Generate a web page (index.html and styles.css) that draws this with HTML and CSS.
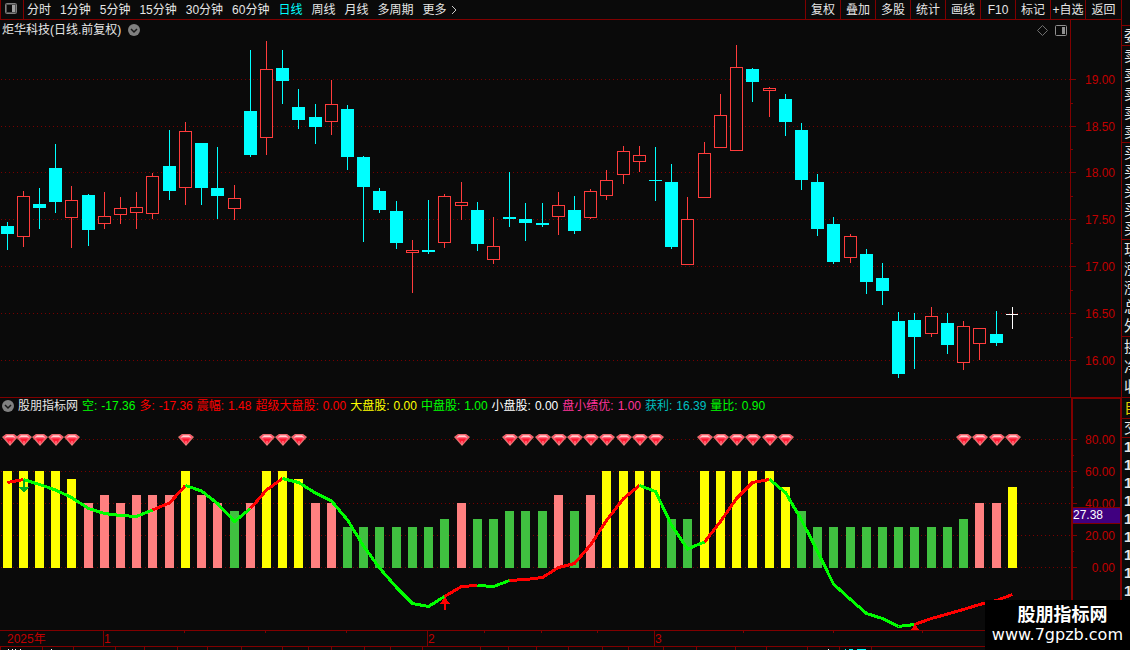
FILE: index.html
```html
<!DOCTYPE html>
<html lang="zh-CN">
<head>
<meta charset="utf-8">
<title>炬华科技 日线</title>
<link rel="stylesheet" href="styles.css">
</head>
<body>
<div class="terminal">
  <main class="main">
    <header class="topbar">
      <button class="layout-btn" type="button" aria-label="布局">
        <svg width="12" height="12" viewBox="0 0 12 12"><rect x=".5" y=".5" width="11" height="10" rx="1" fill="none" stroke="#808080"/><rect x="1.500" y="1.500" width="9" height="8" fill="none" stroke="#505050"/><rect x="7" y="2" width="3" height="7" fill="#a0a0a0"/></svg>
      </button>
      <nav class="periods">
        <button type="button">分时</button>
        <button type="button">1分钟</button>
        <button type="button">5分钟</button>
        <button type="button">15分钟</button>
        <button type="button">30分钟</button>
        <button type="button">60分钟</button>
        <button type="button" class="active">日线</button>
        <button type="button">周线</button>
        <button type="button">月线</button>
        <button type="button">多周期</button>
        <button type="button" class="more">更多<svg width="6" height="10" viewBox="0 0 6 10"><path d="M1 1l4 4-4 4" fill="none" stroke="#c8c8c8"/></svg></button>
      </nav>
      <div class="tools">
        <button type="button">复权</button>
        <button type="button">叠加</button>
        <button type="button">多股</button>
        <button type="button">统计</button>
        <button type="button">画线</button>
        <button type="button">F10</button>
        <button type="button">标记</button>
        <button type="button">+自选</button>
        <button type="button">返回</button>
      </div>
    </header>

    <section class="panel price">
      <div class="plot">
        <div class="price-head">
          <h1>炬华科技(日线.前复权)</h1>
          <button type="button" aria-label="展开"><svg width="12" height="12" viewBox="0 0 12 12"><circle cx="6" cy="6" r="6" fill="#808080"/><path d="M3 5l3 3 3-3" fill="none" stroke="#181818" stroke-width="1.5"/></svg></button>
          <span class="spacer"></span>
          <button type="button" aria-label="标注"><svg width="11" height="11" viewBox="0 0 11 11"><path d="M5.5.5l5 5-5 5-5-5z" fill="none" stroke="#707070"/></svg></button>
          <button type="button" aria-label="侧栏"><svg width="12" height="11" viewBox="0 0 12 11"><rect x=".5" y=".5" width="11" height="10" rx="1" fill="none" stroke="#909090"/><rect x="7" y="2" width="3" height="7" fill="#909090"/></svg></button>
        </div>
        <svg class="chart" id="price-chart" width="100%" height="357"></svg>
      </div>
      <svg class="scale" id="price-scale" width="50" height="377"></svg>
    </section>

    <section class="panel indicator">
      <div class="plot">
        <div class="legend">
          <button type="button" aria-label="展开"><svg width="12" height="12" viewBox="0 0 12 12"><circle cx="6" cy="6" r="6" fill="#808080"/><path d="M3 5l3 3 3-3" fill="none" stroke="#181818" stroke-width="1.5"/></svg></button>
          <h2>股朋指标网</h2>
          <span class="item lime"><span>空:</span><b>-17.36</b></span>
          <span class="item red"><span>多:</span><b>-17.36</b></span>
          <span class="item red"><span>震幅:</span><b>1.48</b></span>
          <span class="item red"><span>超级大盘股:</span><b>0.00</b></span>
          <span class="item yellow"><span>大盘股:</span><b>0.00</b></span>
          <span class="item lime"><span>中盘股:</span><b>1.00</b></span>
          <span class="item white"><span>小盘股:</span><b>0.00</b></span>
          <span class="item pink"><span>盘小绩优:</span><b>1.00</b></span>
          <span class="item teal"><span>获利:</span><b>16.39</b></span>
          <span class="item lime"><span>量比:</span><b>0.90</b></span>
        </div>
        <svg class="chart" id="ind-chart" width="100%" height="215"></svg>
      </div>
      <div class="scale-box">
        <svg class="scale" id="ind-scale" width="47" height="230"></svg>
        <output class="marker">27.38</output>
      </div>
    </section>

    <svg class="timeline" id="timeline" width="100%" height="17"></svg>
    <svg class="status" id="status" width="100%" height="3"></svg>
  </main>

  <aside class="quotes">
    <div class="group rows19"><span>委</span></div>
    <div class="group rows19 five"><span>卖</span><span>卖</span><span>卖</span><span>卖</span><span>卖</span></div>
    <div class="group rows19 five"><span>买</span><span>买</span><span>买</span><span>买</span><span>买</span></div>
    <div class="group rows19 five"><span>现</span><span>涨</span><span>涨</span><span>总</span><span>外</span></div>
    <div class="group rows20"><span>换</span><span>净</span><span>收</span></div>
    <div class="group rows20 tab"><span>自</span></div>
    <div class="group rows18"><span>交</span></div>
    <div class="group rows18 ticks"><span>1</span><span>1</span><span>1</span><span>1</span><span>1</span><span>1</span><span>1</span><span>1</span><span>1</span></div>
  </aside>

  <div class="watermark">
    <strong>股朋指标网</strong>
    <span>www.7gpzb.com</span>
  </div>
</div>
<script src="chart.js"></script>
</body>
</html>
```

FILE: styles.css
```css
* { box-sizing: border-box; }

body {
  margin: 0;
  background: #0a0a0a;
  color: #e6e6e6;
  font: 12px/16px "Liberation Sans", "Noto Sans CJK SC", sans-serif;
}

button {
  margin: 0;
  padding: 0;
  border: 0;
  background: none;
  color: inherit;
  font: inherit;
  white-space: nowrap;
  cursor: pointer;
}

svg { display: block; flex: none; }
h1, h2, b { margin: 0; font-size: 12px; font-weight: 400; }

.terminal {
  position: relative;
  display: flex;
  height: 100vh;
  overflow: hidden;
}

.main {
  flex: 1;
  min-width: 0;
  display: flex;
  flex-direction: column;
}

/* top bar */
.topbar {
  display: flex;
  height: 20px;
  flex: none;
  border-bottom: 1px solid #800000;
}
.layout-btn {
  width: 24px;
  padding: 0 4px 2px;
  border: solid #800000;
  border-width: 0 1px;
}
.periods {
  flex: 1;
  display: flex;
  gap: 9px;
  padding-left: 3px;
  line-height: 18px;
}
.periods .active { color: #00ffff; }
.more { display: flex; align-items: center; gap: 4px; }
.tools { display: flex; line-height: 18px; }
.tools button {
  width: 35px;
  border-left: 1px solid #800000;
}
.tools button:last-child { width: 36px; }

/* panels */
.panel { display: flex; flex: none; }
.plot { flex: 1; min-width: 0; }
.price-head {
  display: flex;
  align-items: center;
  gap: 7px;
  height: 20px;
  padding: 0 3px 0 2px;
}
.price-head h1 { white-space: nowrap; }
.spacer { flex: 1; }
.price .scale { border-left: 1px solid #800000; width: 51px; }

.indicator { border-top: 1px solid #800000; }
.legend {
  display: flex;
  align-items: center;
  gap: 4px;
  height: 17px;
  padding: 0 0 2px 2px;
  white-space: nowrap;
}
.item { display: flex; gap: 4px; }
.lime { color: #00ff00; }
.red { color: #ff0000; }
.yellow { color: #ffff00; }
.white { color: #ffffff; }
.pink { color: #ff3399; }
.teal { color: #00c0c0; }

.scale-box {
  position: relative;
  border: solid #800000;
  border-width: 1px 1px 0 2px;
}
.marker {
  position: absolute;
  top: 108px;
  left: 0;
  right: 0;
  background: #400080;
  border: solid #800000;
  border-width: 1px 0;
  line-height: 15px;
  color: #ffffff;
}

.timeline { border-top: 1px solid #800000; border-bottom: 1px solid #800000; }

/* quote column */
.quotes {
  width: 9px;
  flex: none;
  overflow: hidden;
  padding-top: 25px;
  border-left: 1px solid #800000;
  font-size: 15px;
}
.group {
  border-top: 1px solid #800000;
  padding-left: 2px;
}
.group span { display: block; }
.rows19 { line-height: 19px; }
.five { padding-bottom: 1px; }
.rows20 { line-height: 20px; }
.rows18 { line-height: 18px; }
.tab { color: #e0d000; }
.ticks { font-weight: 700; }

/* watermark */
.watermark {
  position: absolute;
  right: 0;
  bottom: 0;
  padding: 4px 7px 6px;
  background: #000000;
  color: #ffffff;
  text-align: center;
}
.watermark strong {
  display: block;
  padding-left: 10px;
  font-size: 18px;
  line-height: 22px;
}
.watermark span {
  display: block;
  font: 16px/18px "DejaVu Sans", sans-serif;
}

/* chart marks */
.chart, .scale, .timeline, .status { shape-rendering: crispEdges; overflow: hidden; }
.grid { stroke: #780000; stroke-dasharray: 1 3; }
.up { fill: #0a0a0a; stroke: #ff3c3c; }
.wick-up { stroke: #ff3c3c; }
.down { fill: #00ffff; }
.wick-down { stroke: #00ffff; }
.cross { stroke: #ffffff; }
.bar-high { fill: #ffff00; }
.bar-mid { fill: #ff8080; }
.bar-low { fill: #40c040; }
.trend { fill: none; stroke-width: 3; }
.tick { stroke: #800000; }
.label { fill: #c00000; font-size: 12px; }
.end { text-anchor: end; }
```

FILE: chart.js
```js
const NS = 'http://www.w3.org/2000/svg';

function add(parent, tag, attrs, text) {
  const el = document.createElementNS(NS, tag);
  for (const k in attrs) el.setAttribute(k, attrs[k]);
  if (text) el.textContent = text;
  parent.appendChild(el);
  return el;
}
function layer(id, top) {
  return add(document.getElementById(id), 'g', { transform: `translate(0,${-top})` });
}
function hline(g, cls, x1, x2, y) {
  add(g, 'line', { class: cls, x1, x2, y1: y + 0.5, y2: y + 0.5 });
}
function vline(g, cls, x, y1, y2) {
  if (y2 > y1) add(g, 'line', { class: cls, x1: x + 0.5, x2: x + 0.5, y1, y2 });
}

// x, high, body top, body bottom, low, direction
const candles = [
  [1,222,226,234,250,0],[17,191,196,237,247,1],[33,188,204,208,229,0],[49,144,168,202,213,0],
  [65,186,200,218,248,1],[82,194,195,230,246,0],[98,192,216,224,229,1],[114,197,208,215,224,1],
  [130,192,207,213,229,1],[146,173,176,214,219,1],[163,130,166,191,200,0],[179,122,131,188,205,1],
  [195,143,143,188,205,0],[211,147,188,196,219,0],[228,185,198,209,220,1],[244,50,111,155,157,0],
  [260,41,69,138,155,1],[276,50,68,81,104,0],[292,89,107,120,129,0],[309,104,117,127,144,0],
  [325,80,104,122,135,1],[341,105,109,157,170,0],[357,156,157,187,242,0],[373,188,191,210,213,0],
  [390,201,211,243,249,0],[406,240,250,253,293,1],[422,200,250,252,254,0],[438,194,196,243,248,1],
  [455,182,202,206,220,1],[471,202,210,244,251,0],[487,217,246,260,264,1],[503,172,217,219,227,0],
  [519,203,219,223,241,0],[536,203,223,225,227,0],[552,192,205,217,235,1],[568,196,210,231,234,0],
  [584,189,191,218,219,1],[600,170,180,196,200,1],[617,146,151,175,184,1],[633,146,155,162,172,1],
  [649,147,180,181,201,0],[665,164,182,247,249,0],[681,197,219,265,265,1],[698,142,153,198,198,1],
  [714,94,115,148,148,1],[730,45,67,151,151,1],[746,68,69,82,102,0],[763,87,88,91,117,1],
  [779,94,99,122,136,0],[795,123,130,180,190,0],[811,174,182,229,236,0],[827,217,224,262,264,0],
  [844,234,236,258,263,1],[860,249,254,282,294,0],[876,263,278,291,305,0],[892,312,321,374,378,0],
  [908,313,320,337,369,0],[925,307,316,334,337,1],[941,313,323,345,354,0],[957,321,326,363,370,1],
  [973,328,328,344,360,1],[990,311,334,343,346,0],[1006,307,314,315,329,2]
];
const xs = candles.map(c => c[0]);

const price = layer('price-chart', 40);
const priceRows = [[79,'19.00'],[126,'18.50'],[172,'18.00'],[219,'17.50'],[266,'17.00'],[313,'16.50'],[360,'16.00']];
priceRows.forEach(([y]) => hline(price, 'grid', 1, '100%', y));
for (const [x, high, top, bottom, low, dir] of candles) {
  if (dir === 2) {
    hline(price, 'cross', x, x + 12, top);
    vline(price, 'cross', x + 6, high, low);
    continue;
  }
  const wick = dir ? 'wick-up' : 'wick-down';
  vline(price, wick, x + 6, high, top);
  vline(price, wick, x + 6, bottom, low);
  if (dir) add(price, 'rect', { class: 'up', x: x + 0.5, y: top + 0.5, width: 12, height: bottom - top - 1 });
  else add(price, 'rect', { class: 'down', x, y: top, width: 13, height: bottom - top });
}

const pScale = layer('price-scale', 20);
priceRows.forEach(([y, t]) => {
  hline(pScale, 'tick', 0, 5, y);
  add(pScale, 'text', { class: 'label end', x: 44, y: y + 5 }, t);
});
[103,149,196,243,290,337].forEach(y => hline(pScale, 'tick', 0, 2, y));

// indicator panel
const ind = layer('ind-chart', 415);
const indRows = [[439,'80.00'],[471,'60.00'],[503,'40.00'],[535,'20.00'],[567,'0.00']];
indRows.forEach(([y]) => hline(ind, 'grid', 1, '100%', y));

const strength = [60,60,60,60,55,40,45,40,45,45,45,60,45,40,35,40,60,60,55,40,40,25,25,25,25,25,25,30,40,30,30,
  35,35,35,45,35,45,60,60,60,60,30,30,60,60,60,60,60,50,35,25,25,25,25,25,25,25,25,25,30,40,40,50];
strength.forEach((v, i) => {
  const top = 567 - v * 1.6;
  const cls = v >= 50 ? 'bar-high' : v >= 40 ? 'bar-mid' : 'bar-low';
  add(ind, 'rect', { class: cls, x: xs[i] + 2, y: top, width: 9, height: 568 - top });
});

const trend = [482.5,479.5,484.5,490,497.5,508.5,513.5,515.5,516.5,510,503,485.5,491,503.5,521.5,508.5,490,478.5,
  482.5,493,501,520,546,568,587.5,603.5,606.5,596.5,586.5,585.5,586.5,580.5,579.5,577.5,567.5,563.5,545,520.5,
  498.5,485.5,491.5,525,549,542,521.5,498.5,482.5,479.5,492.5,520,551.5,584,599.5,613.5,618.5,626.5,624.5,618.5,
  614,609.5,604.5,600.5,594.5];
const turns = [0,1,9,11,15,17,27,29,31,39,43,47,56,62];
for (let s = 0; s < turns.length - 1; s++) {
  const pts = [];
  for (let i = turns[s]; i <= turns[s + 1]; i++) pts.push(`${xs[i] + 6.5},${trend[i]}`);
  add(ind, 'polyline', { class: 'trend', stroke: s % 2 ? '#00ff00' : '#ff0000', points: pts.join(' ') });
}

// turning-point arrows
add(ind, 'path', { d: 'M23 480h2v7h4l-5 6-5-6h4z', fill: '#00b020' });
add(ind, 'path', { d: 'M445 597l5 7h-4v6h-2v-6h-4z', fill: '#ff0000' });
add(ind, 'path', { d: 'M915 624l4 6h-8z', fill: '#ff0000' });

// gems
[0,1,2,3,4,11,16,17,18,28,31,32,33,34,35,36,37,38,39,40,43,44,45,46,47,48,59,60,61,62].forEach(i => {
  const g = add(ind, 'g', { transform: `translate(${i ? xs[i] - 1 : 2},434)`, 'shape-rendering': 'auto' });
  add(g, 'path', { d: 'M4 0h8l4 3-8 9-8-9z', fill: '#d88070' });
  add(g, 'path', { d: 'M4 .5h8l3 2.500-7 8-7-8z', fill: '#ff5068' });
  add(g, 'path', { d: 'M3 3.500l2-2h6l2 2-2-.5H5z', fill: '#ffd8d8', stroke: '#ffb8b8', 'stroke-width': 0.5 });
  add(g, 'path', { d: 'M4 4.500h8l-4 6z', fill: '#ff1830' });
  add(g, 'path', { d: 'M8 7v4', fill: 'none', stroke: '#ff98a0', 'stroke-width': 1 });
});

const iScale = layer('ind-scale', 399);
indRows.forEach(([y, t]) => {
  hline(iScale, 'tick', 0, 4, y);
  add(iScale, 'text', { class: 'label end', x: 42, y: y + 5 }, t);
});
[455,487,519,551].forEach(y => hline(iScale, 'tick', 0, 1, y));

// time axis
const time = layer('timeline', 631);
[184,265,346,484,541,597,743,833,922].forEach(x => vline(time, 'tick', x, 631, 633));
[[103,'1'],[427,'2'],[654,'3']].forEach(([x, t]) => {
  vline(time, 'tick', x, 631, 646);
  add(time, 'text', { class: 'label', x: x + 1, y: 643 }, t);
});
add(time, 'text', { class: 'label', x: 7, y: 643 }, '2025年');

// top edge of the tab strip
const status = layer('status', 647);
[0,42,73,115,144,177,207,241,282,308,331,364,390,422,480,508,536,568,602,628,663,696,735,766,807,839,871]
  .forEach(x => vline(status, 'tick', x, 647, 650));
[8,12,15,20,51,828].forEach(x => vline(status, 'cross', x, 649, 650));
[[845,1],[849,4],[857,9]].forEach(([x, w]) => add(status, 'rect', { class: 'down', x, y: 649, width: w, height: 1 }));
```
